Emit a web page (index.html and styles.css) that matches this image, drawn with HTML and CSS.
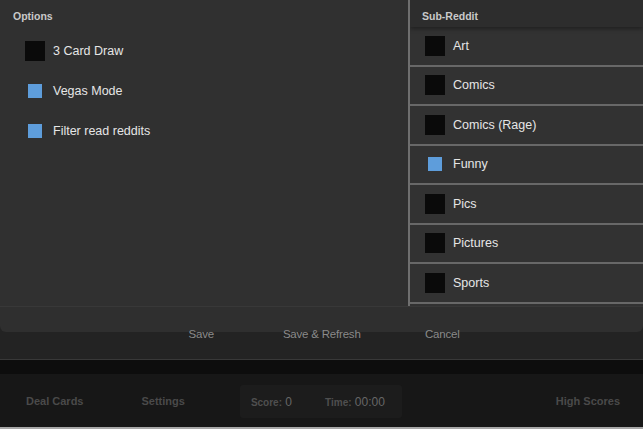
FILE: index.html
```html
<!DOCTYPE html>
<html>
<head>
<meta charset="utf-8">
<link rel="stylesheet" href="styles.css">
</head>
<body>
<div class="app">
  <div class="dialog">
    <div class="panes">
      <section class="options">
        <div class="opt-head">Options</div>
        <div class="opt-row"><span class="box"></span><span class="label">3 Card Draw</span></div>
        <div class="opt-row"><span class="box on"></span><span class="label">Vegas Mode</span></div>
        <div class="opt-row"><span class="box on"></span><span class="label">Filter read reddits</span></div>
      </section>
      <div class="divider"></div>
      <section class="subs">
        <div class="sub-head">Sub-Reddit</div>
        <div class="sub-row"><span class="box"></span><span class="label">Art</span></div>
        <div class="sub-row"><span class="box"></span><span class="label">Comics</span></div>
        <div class="sub-row"><span class="box"></span><span class="label">Comics (Rage)</span></div>
        <div class="sub-row"><span class="box on"></span><span class="label">Funny</span></div>
        <div class="sub-row"><span class="box"></span><span class="label">Pics</span></div>
        <div class="sub-row"><span class="box"></span><span class="label">Pictures</span></div>
        <div class="sub-row"><span class="box"></span><span class="label">Sports</span></div>
      </section>
    </div>
    <div class="dialog-foot"></div>
  </div>
  <div class="actions">
    <span class="act">Save</span>
    <span class="act">Save &amp; Refresh</span>
    <span class="act">Cancel</span>
  </div>
  <div class="toolbar">
    <div class="tb-top"></div>
    <div class="tb-main">
      <span class="tb-btn deal">Deal Cards</span>
      <span class="tb-btn settings">Settings</span>
      <div class="stats">
        <span class="stat"><b>Score:</b> 0</span>
        <span class="stat"><b>Time:</b> 00:00</span>
      </div>
      <span class="tb-btn high">High Scores</span>
    </div>
  </div>
</div>
</body>
</html>
```
FILE: styles.css
```css
* { box-sizing: border-box; }
html, body { margin: 0; padding: 0; }
body {
  background: #232323;
  font-family: "Liberation Sans", Arial, sans-serif;
  width: 643px;
  height: 429px;
  overflow: hidden;
}
.app { display: flex; flex-direction: column; height: 429px; }

.dialog {
  background: #2f2f2f;
  border-radius: 0 0 6px 6px;
  flex: none;
}
.panes {
  display: flex;
  height: 307px;
  border-bottom: 1px solid #383838;
}
.options { width: 408px; background: #303030; }
.divider { width: 2px; background: #6f6f6f; }
.subs { flex: 1; background: #323232; overflow: hidden; }

.opt-head {
  height: 31px;
  padding: 10px 0 0 13px;
  font-size: 10.5px;
  font-weight: bold;
  color: #c9c9c9;
}
.opt-row {
  height: 40px;
  display: flex;
  align-items: center;
  padding-left: 25px;
}
.box {
  width: 20px;
  height: 20px;
  background: #0a0a0a;
  flex: none;
  position: relative;
}
.box.on { background: transparent; }
.box.on::after {
  content: "";
  position: absolute;
  left: 3px; top: 3px;
  width: 14px; height: 14px;
  background: #5e9ddb;
}
.label {
  margin-left: 8px;
  font-size: 12.5px;
  color: #e6e6e6;
}

.sub-head {
  height: 27px;
  padding: 10px 0 0 12px;
  font-size: 10.5px;
  font-weight: bold;
  color: #c9c9c9;
  background: #2d2d2d;
  box-shadow: 0 2px 4px rgba(0,0,0,0.35);
  position: relative;
}
.sub-row {
  height: 39.5px;
  display: flex;
  align-items: center;
  padding-left: 15px;
  border-bottom: 2px solid #686868;
}

.dialog-foot { height: 25px; }

.actions {
  display: flex;
  height: 39px;
  margin-top: -12px;
  padding: 8px 0 0 141px;
  align-items: flex-start;
}
.act {
  width: 120.5px;
  text-align: center;
  font-size: 11.5px;
  color: #8a8a8a;
  letter-spacing: -0.2px;
}

.toolbar {
  flex: 1;
  display: flex;
  flex-direction: column;
  border-top: 1px solid #383838;
  border-bottom: 2px solid #a8a8a8;
}
.tb-top { height: 14px; background: #0d0d0d; }
.tb-main {
  flex: 1;
  background: #171717;
  display: flex;
  align-items: center;
}
.tb-btn {
  font-size: 11px;
  font-weight: bold;
  color: #4a4a4a;
}
.deal { margin-left: 26px; }
.settings { margin-left: 58px; }
.stats {
  margin-left: 55px;
  width: 162px;
  height: 33px;
  background: #1c1c1c;
  border-radius: 3px;
  display: flex;
  align-items: center;
  padding-left: 11px;
  gap: 33px;
  margin-top: 2px;
}
.stat { font-size: 12px; color: #666; }
.stat b { font-size: 10px; color: #4f4f4f; }
.high { margin-left: auto; margin-right: 23px; }
```
